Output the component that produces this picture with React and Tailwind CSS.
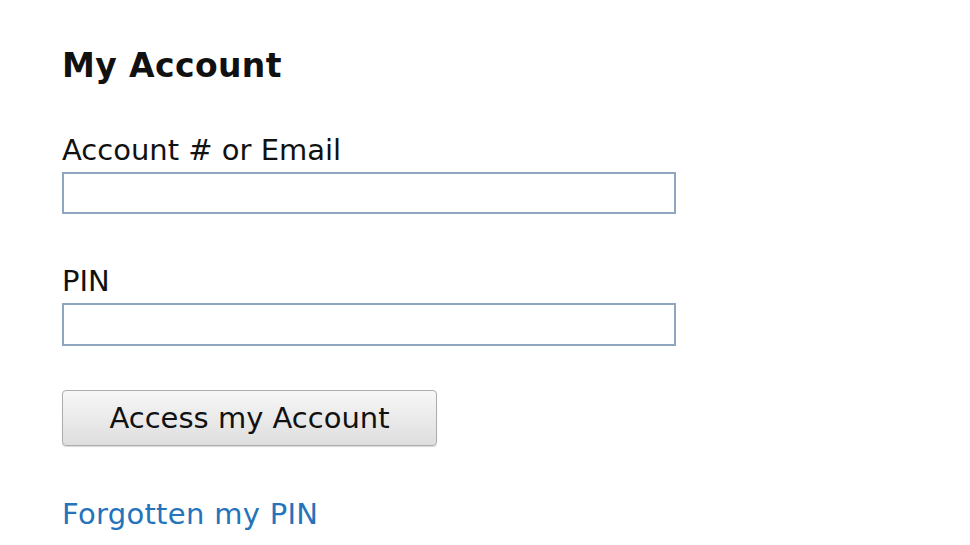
import React from 'react';

export default function App() {
    return (
        <div className="w-[970px] h-[545px] bg-white pl-[62px] pt-[47px] text-[#111]" style={{ fontFamily: '"DejaVu Sans", Verdana, sans-serif' }}>
            <h1 className="text-[33px] leading-[38px] font-bold tracking-[0.4px]">My Account</h1>

            <form className="mt-[48px] flex flex-col items-start" onSubmit={(e) => e.preventDefault()}>
                <label className="text-[29px] leading-[34px]">Account # or Email</label>
                <input
                    type="text"
                    className="mt-[5px] w-[614px] h-[42px] border-2 border-[#8ea6c0] bg-white outline-none"
                />

                <label className="mt-[50px] text-[29px] leading-[34px]">PIN</label>
                <input
                    type="password"
                    className="mt-[5px] w-[614px] h-[43px] border-2 border-[#8ea6c0] bg-white outline-none"
                />

                <button
                    type="submit"
                    className="mt-[44px] w-[375px] h-[56px] rounded-[4px] border border-[#adadad] bg-gradient-to-b from-[#f7f7f7] to-[#dedede] text-[29px] leading-[34px] text-[#111] shadow-[0_1px_1px_rgba(0,0,0,0.15)]"
                >
                    Access my Account
                </button>

                <a href="#" className="mt-[51px] text-[29px] leading-[34px] tracking-[0.3px] text-[#2473bb]">Forgotten my PIN</a>
            </form>
        </div>
    );
}
